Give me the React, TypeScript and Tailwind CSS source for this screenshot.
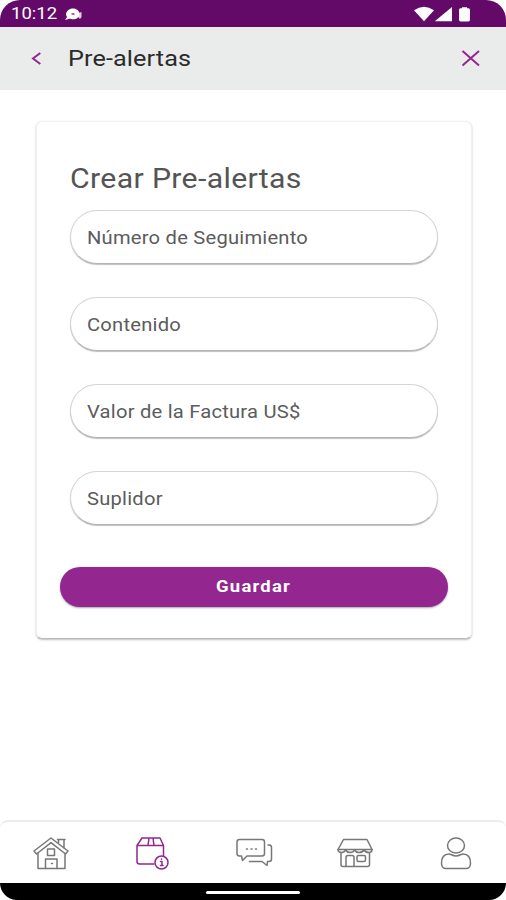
import type { ReactNode } from 'react';

const FIELDS = [
  'Número de Seguimiento',
  'Contenido',
  'Valor de la Factura US$',
  'Suplidor',
];

function StatusBar() {
  return (
    <div className="flex h-[27px] items-center justify-between rounded-t-[20px] bg-[#630a68] pr-[34px] pl-[11px] text-white">
      <div className="flex items-center pt-[2px]">
        <span className="w-[54px] origin-left scale-x-[1.12] text-[16.5px] leading-none whitespace-nowrap">
          10:12
        </span>
        <svg width="18" height="13" viewBox="0 0 18 13" fill="currentColor">
          <path d="M8 0.5C12 0.5 14.5 3 14.5 6C14.5 9 12 11.3 8 11.3C6.5 11.3 5.5 11 4.5 10.8L0 12L2 9C1.3 8 1 7 1 6C1.5 3 4 0.5 8 0.5Z" />
          <path d="M13.5 5L16.500 4V9L15 11L13 9Z" opacity="0.8" />
          <path d="M6.500 6h3" stroke="#630a68" strokeWidth="1.2" />
        </svg>
      </div>
      <svg width="58" height="16" viewBox="0 0 58 16" fill="currentColor">
        <path d="M0 4.3Q10 -3 20 4.3L10 15.2Z" />
        <path d="M38 1V15.3H20.8Z" />
        <path d="M48 2.2V1.2h5v1h1.500q1.500 0 1.500 2v9.4q0 2-1.500 2h-8q-1.500 0-1.500-2V4.200q0-2 1.500-2Z" />
      </svg>
    </div>
  );
}

function Header() {
  return (
    <header className="flex h-[63px] items-center bg-[#e9eceb] pr-[26px] pl-[31px]">
      <svg width="11" height="14" viewBox="0 0 11 14" fill="none" stroke="#93278f" strokeWidth="2">
        <path d="M9.300 1L2 6.500L9.300 12" />
      </svg>
      <h1 className="ml-[26px] origin-left scale-x-[1.12] text-[22.5px] leading-none tracking-[0.1px] text-[#2b2b2b]">
        Pre-alertas
      </h1>
      <svg className="ml-auto" width="19" height="17" viewBox="0 0 19 17" fill="none" stroke="#93278f" strokeWidth="2">
        <path d="M1.500 1L18 15.500M18 1L1.500 15.500" />
      </svg>
    </header>
  );
}

function Field({ label }: { label: string }) {
  return (
    <div className="flex h-[54px] items-center rounded-full border border-[#d4d4d4] border-b-[#b4b4b4] bg-white pt-[2px] pl-4 shadow-[0_1px_1px_rgba(0,0,0,0.25)]">
      <span className="origin-left scale-x-[1.12] text-[18px] leading-none tracking-[0.2px] whitespace-nowrap text-[#5c5c5c]">
        {label}
      </span>
    </div>
  );
}

function NavIcon({ children, active }: { children: ReactNode; active?: boolean }) {
  return (
    <svg
      className={active ? 'text-[#93278f]' : 'text-[#777]'}
      width="40"
      height="36"
      viewBox="0 0 40 36"
      fill="none"
      stroke="currentColor"
      strokeWidth="1.5"
      strokeLinejoin="round"
      strokeLinecap="round"
    >
      {children}
    </svg>
  );
}

function BottomNav() {
  return (
    <nav className="flex h-[63px] items-center justify-between rounded-t-lg border-t-2 border-[#ececec] bg-white pr-[30px] pb-px pl-[31px]">
      <NavIcon>
        <path d="M3 17L20 4L37 17L34.500 20L20 8.700L5.500 20Z" />
        <path d="M7 19.500V34.500H34V19.500M27.500 8.500V5.500H33V14M26.500 5.500H34" />
        <path d="M16.500 15H23.500V21.500H16.500ZM14.500 34.500V25H26V34.500M20.500 29.500h1" />
      </NavIcon>
      <NavIcon active>
        <path d="M10 4H28L31.500 11.500V22M22 30H7.500Q5 30 5 27.500V11.500L10 4M5 11.500H31.500M17 4L16 11.500M21 4L22 11.500" />
        <circle cx="29.500" cy="28.500" r="6.500" />
        <path d="M28.500 27.500H30V31.500M28.500 31.500H31M29.500 25V25.200" />
      </NavIcon>
      <NavIcon>
        <path d="M5.500 5.500H28Q30.500 5.500 30.500 8V19.500Q30.500 22 28 22H13L8.500 26.500L7.500 22H5.500Q3 22 3 19.500V8Q3 5.500 5.500 5.500Z" />
        <path d="M34 11H35Q37.500 11 37.500 13.500V25Q37.500 27.500 35 27.500H33.500L33 31.500L28 27.500H15.500" />
        <path d="M12.500 15h1M17 15h1M21.500 15h1" />
      </NavIcon>
      <NavIcon>
        <path d="M8.500 5.500H32L37 15.500H3Z" />
        <path d="M3 15.500Q3 18.500 6.500 18.500Q9.500 18.500 10.500 16Q12 18.500 15 18.500Q18.500 18.500 19.500 16Q21 18.500 24 18.500Q27.500 18.500 29 16Q30.500 18.500 34 18.500Q37 18.500 37 15.500" />
        <path d="M6 19V30.500Q6 32.500 8 32.500H32.500Q34.500 32.500 34.500 30.500V19M11 32V23.500Q11 21.500 13 21.500H17Q19 21.500 19 23.500V32" />
        <rect x="22" y="21.500" width="8.500" height="6" rx="1.500" />
      </NavIcon>
      <NavIcon>
        <ellipse cx="20" cy="11.500" rx="8.500" ry="7.500" />
        <path d="M13 20C7 20 5.500 25 5.500 29.500C5.500 32.500 7.500 34.500 10 34.500H30C32.500 34.500 34.500 32.500 34.500 29.500C34.500 25 33 20 27 20C25 20 23.500 22 20 22C16.500 22 15 20 13 20Z" />
      </NavIcon>
    </nav>
  );
}

export default function App() {
  return (
    <div className="flex h-screen w-full flex-col overflow-hidden bg-white font-[Roboto,sans-serif]">
      <StatusBar />
      <Header />

      <main className="flex-1 pt-[31px] pr-[34px] pl-9">
        <div className="h-[518px] rounded-md border border-[#f0f0f0] border-b-[#bbb] bg-white px-[23px] pt-[42px] shadow-[0_1px_2px_rgba(0,0,0,0.25)]">
          <div className="px-[10px]">
            <h2 className="origin-left scale-x-[1.12] text-[27px] leading-[30px] tracking-[0.3px] text-[#545454]">
              Crear Pre-alertas
            </h2>
            <div className="mt-[16px] flex flex-col gap-[33px]">
              {FIELDS.map((label) => (
                <Field key={label} label={label} />
              ))}
            </div>
          </div>
          <button className="mt-[42px] flex h-[40px] w-full items-center justify-center rounded-full bg-[#93278f] text-white shadow-[0_1px_2px_rgba(0,0,0,0.35)]">
            <span className="scale-x-[1.12] text-[16.5px] leading-none font-bold tracking-[1.1px]">
              Guardar
            </span>
          </button>
        </div>
      </main>

      <BottomNav />
      <div className="flex h-[17px] items-center justify-center rounded-b-[18px] bg-black pt-[2px]">
        <div className="h-[3px] w-[94px] rounded-full bg-white" />
      </div>
    </div>
  );
}
